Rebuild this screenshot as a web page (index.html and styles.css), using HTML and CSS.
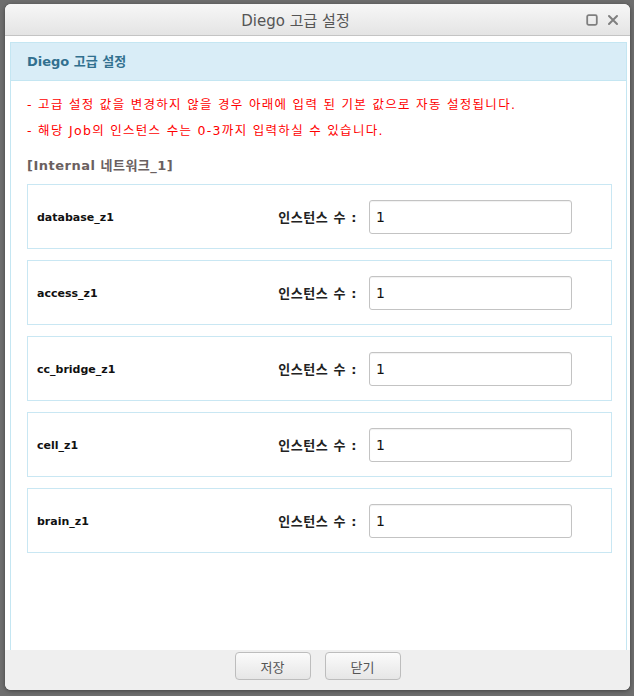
FILE: index.html
```html
<!DOCTYPE html>
<html lang="ko">
<head>
<meta charset="utf-8">
<title>Diego 고급 설정</title>
<link rel="stylesheet" href="styles.css">
</head>
<body>
<div class="dialog">
  <div class="titlebar">
    <span class="title">Diego 고급 설정</span>
    <div class="win-icons">
      <svg width="12" height="12" viewBox="0 0 12 12"><rect x="1.2" y="1.2" width="9.6" height="9.6" rx="1.5" fill="none" stroke="#7f7f7f" stroke-width="1.8"/></svg>
      <svg width="12" height="12" viewBox="0 0 12 12"><path d="M2 2 L10 10 M10 2 L2 10" stroke="#7f7f7f" stroke-width="2" stroke-linecap="round"/></svg>
    </div>
  </div>
  <div class="content">
    <div class="panel">
      <div class="panel-head">Diego 고급 설정</div>
      <div class="panel-body">
        <p class="notice">- 고급 설정 값을 변경하지 않을 경우 아래에 입력 된 기본 값으로 자동 설정됩니다.</p>
        <p class="notice">- 해당 Job의 인스턴스 수는 0-3까지 입력하실 수 있습니다.</p>
        <h3 class="section">[Internal 네트워크_1]</h3>
        <div class="job">
          <span class="job-name">database_z1</span>
          <label class="job-label">인스턴스 수 :</label>
          <input class="job-input" type="text" value="1">
        </div>
        <div class="job">
          <span class="job-name">access_z1</span>
          <label class="job-label">인스턴스 수 :</label>
          <input class="job-input" type="text" value="1">
        </div>
        <div class="job">
          <span class="job-name">cc_bridge_z1</span>
          <label class="job-label">인스턴스 수 :</label>
          <input class="job-input" type="text" value="1">
        </div>
        <div class="job">
          <span class="job-name">cell_z1</span>
          <label class="job-label">인스턴스 수 :</label>
          <input class="job-input" type="text" value="1">
        </div>
        <div class="job">
          <span class="job-name">brain_z1</span>
          <label class="job-label">인스턴스 수 :</label>
          <input class="job-input" type="text" value="1">
        </div>
      </div>
    </div>
  </div>
  <div class="footer">
    <button class="btn">저장</button>
    <button class="btn">닫기</button>
  </div>
</div>
</body>
</html>
```

FILE: styles.css
```css
html, body {
  margin: 0;
  padding: 0;
}
body {
  width: 634px;
  height: 696px;
  background: #6e6e6e;
  font-family: "DejaVu Sans", "Noto Sans CJK KR", sans-serif;
  padding: 4px 0 0 5px;
  box-sizing: border-box;
  overflow: hidden;
}
.dialog {
  width: 625px;
  height: 686px;
  background: #fff;
  border-radius: 6px;
  box-shadow: 0 1px 4px rgba(0,0,0,0.4);
  display: flex;
  flex-direction: column;
  overflow: hidden;
}
.titlebar {
  height: 31px;
  flex: none;
  background: linear-gradient(#f7f7f7, #e4e4e4);
  border-bottom: 1px solid #c4c4c4;
  display: flex;
  align-items: center;
  justify-content: center;
  padding-right: 44px;
  position: relative;
}
.title {
  font-size: 15px;
  color: #555;
}
.win-icons {
  position: absolute;
  right: 11px;
  top: 10px;
  display: flex;
  gap: 9px;
}
.content {
  flex: 1;
  overflow: hidden;
  padding: 6px 3px 0 5px;
}
.panel {
  border: 1px solid #c4e6f2;
  height: 700px;
}
.panel-head {
  height: 37px;
  background: #d9edf7;
  border-bottom: 1px solid #c4e6f2;
  color: #31708f;
  font-weight: bold;
  font-size: 13px;
  line-height: 37px;
  padding-left: 16px;
}
.panel-body {
  padding: 11px 14px 0 16px;
}
.notice {
  margin: 0;
  color: #ff0000;
  font-size: 12.5px;
  letter-spacing: 1.3px;
  line-height: 26px;
}
.section {
  margin: 13px 0 9px;
  font-size: 13px;
  font-weight: bold;
  color: #6a6060;
  letter-spacing: 0.5px;
  line-height: 18px;
}
.job {
  height: 63px;
  border: 1px solid #c9e7f3;
  display: grid;
  grid-template-columns: 1fr 120px 203px;
  column-gap: 13px;
  align-items: center;
  padding: 0 39px 0 9px;
  margin-bottom: 11px;
}
.job-name {
  font-size: 11px;
  font-weight: bold;
  color: #111;
  padding-top: 1px;
}
.job-label {
  font-size: 13px;
  font-weight: bold;
  color: #222;
  letter-spacing: 0.6px;
  text-align: right;
  margin-right: -1px;
}
.job-input {
  height: 34px;
  box-sizing: border-box;
  border: 1px solid #c3c3c3;
  border-radius: 3px;
  box-shadow: inset 0 1px 1px rgba(0,0,0,0.06);
  padding: 0 6px;
  font-family: "DejaVu Sans", sans-serif;
  font-size: 14px;
  color: #111;
  margin: 0;
}
.footer {
  height: 40px;
  flex: none;
  background: #efefef;
  display: flex;
  justify-content: center;
  align-items: flex-start;
  gap: 14px;
  padding-top: 2px;
  box-sizing: border-box;
}
.btn {
  width: 76px;
  height: 28px;
  border: 1px solid #bdbdbd;
  border-radius: 4px;
  background: linear-gradient(#fbfbfb, #e6e6e6);
  font-family: "Noto Sans CJK KR", sans-serif;
  font-size: 13px;
  color: #555;
  padding: 0;
  margin: 0;
}
```
